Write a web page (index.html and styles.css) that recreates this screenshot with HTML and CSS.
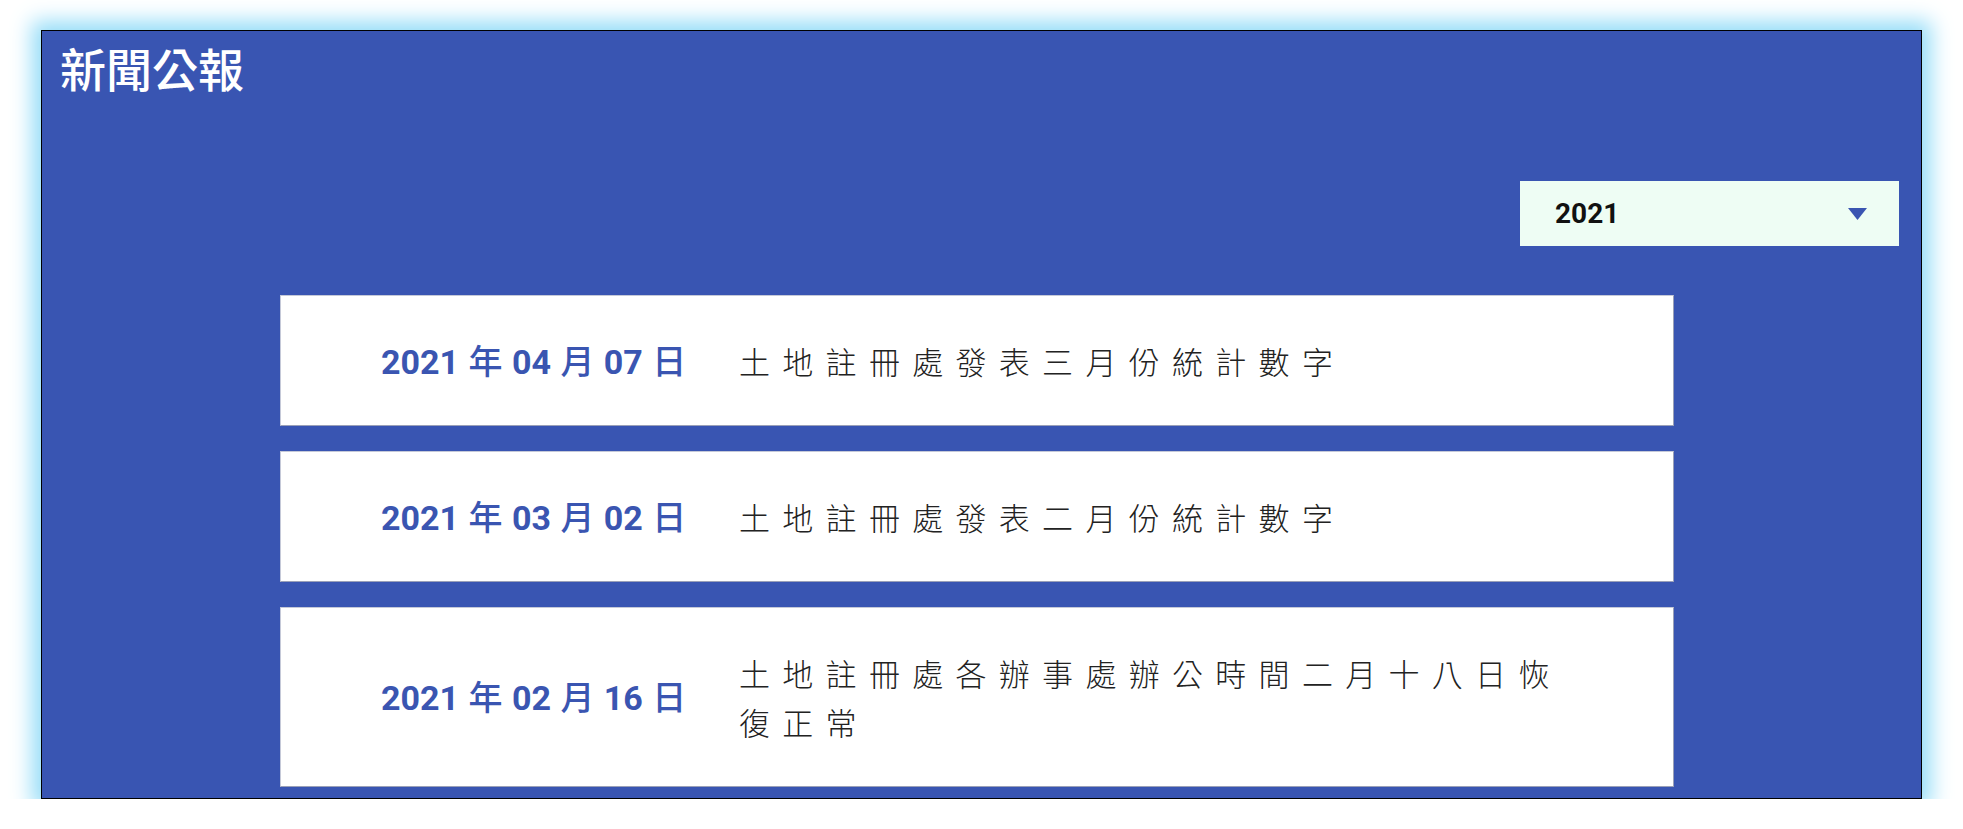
FILE: index.html
```html
<!DOCTYPE html>
<html lang="zh-Hant">
<head>
<meta charset="utf-8">
<title>新聞公報</title>
<link rel="stylesheet" href="styles.css">
</head>
<body>
<section class="panel">
  <h1 class="panel-title">新聞公報</h1>
  <div class="toolbar">
    <div class="year-select">
      <span class="year-value">2021</span>
      <svg class="caret" width="19" height="12" viewBox="0 0 19 12" aria-hidden="true"><polygon points="0,0 19,0 9.5,12" fill="#3a55b1"/></svg>
    </div>
  </div>
  <ul class="news-list">
    <li class="news-item">
      <span class="news-date">2021 <span class="unit">年</span> 04 <span class="unit">月</span> 07 <span class="unit">日</span></span>
      <span class="news-title">土地註冊處發表三月份統計數字</span>
    </li>
    <li class="news-item">
      <span class="news-date">2021 <span class="unit">年</span> 03 <span class="unit">月</span> 02 <span class="unit">日</span></span>
      <span class="news-title">土地註冊處發表二月份統計數字</span>
    </li>
    <li class="news-item">
      <span class="news-date">2021 <span class="unit">年</span> 02 <span class="unit">月</span> 16 <span class="unit">日</span></span>
      <span class="news-title">土地註冊處各辦事處辦公時間二月十八日恢復正常</span>
    </li>
  </ul>
</section>
</body>
</html>
```

FILE: styles.css
```css
html, body {
  margin: 0;
  padding: 0;
  background: #ffffff;
}

body {
  padding: 30px 41px 0 41px;
  font-family: Roboto, "Noto Sans CJK TC", sans-serif;
  overflow: hidden;
}

.panel {
  box-sizing: border-box;
  height: 769px;
  background: #3955b2;
  border: 1px solid #000;
  box-shadow: 0 0 20px 9px rgba(150, 221, 248, 1);
  overflow: hidden;
}

.panel-title {
  margin: 6px 0 0 18px;
  font-family: "Noto Sans CJK TC", sans-serif;
  font-size: 46px;
  font-weight: 500;
  line-height: 60px;
  color: #ffffff;
}

.toolbar {
  display: flex;
  justify-content: flex-end;
  padding: 84px 22px 0 0;
}

.year-select {
  box-sizing: border-box;
  width: 379px;
  height: 65px;
  display: flex;
  align-items: center;
  justify-content: space-between;
  padding: 0 32px 0 35px;
  background: #eefdf4;
}

.year-value {
  font-family: Roboto, sans-serif;
  font-weight: 700;
  font-size: 28px;
  color: #111;
}

.caret {
  display: block;
}

.news-list {
  list-style: none;
  margin: 49px 0 0 0;
  padding: 0 0 0 238px;
  display: flex;
  flex-direction: column;
  gap: 25px;
}

.news-item {
  box-sizing: border-box;
  width: 1394px;
  display: flex;
  align-items: center;
  padding: 40px 102px 40px 100px;
  background: #ffffff;
  border: 1px solid #9aa0b8;
  border-top-color: #c5c9d8;
  border-left-color: #c5c9d8;
}

.news-date {
  flex: 0 0 358px;
  font-family: Roboto, "Noto Sans CJK TC", sans-serif;
  font-weight: 700;
  font-size: 34px;
  line-height: 34px;
  color: #3a55b1;
  white-space: nowrap;
  word-spacing: 1px;
}

.news-date .unit {
  font-family: "Noto Sans CJK TC", sans-serif;
  font-weight: 500;
  line-height: 1;
}

.news-title {
  flex: 1;
  font-family: "Noto Sans CJK TC", sans-serif;
  font-weight: 300;
  font-size: 31px;
  line-height: 49px;
  letter-spacing: 12.3px;
  color: #222;
}
```
